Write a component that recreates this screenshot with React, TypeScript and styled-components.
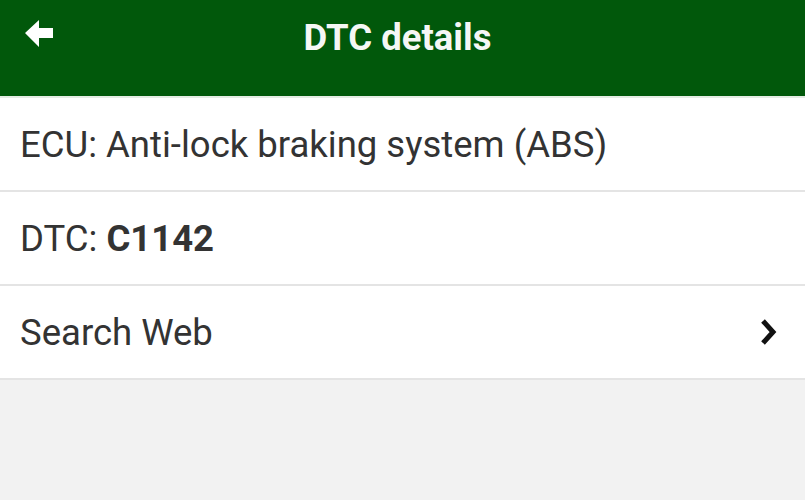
import React from 'react';
import styled, { createGlobalStyle } from 'styled-components';

const GlobalStyle = createGlobalStyle`
  html, body {
    margin: 0;
    padding: 0;
    background: #f2f2f2;
    font-family: Roboto, "Liberation Sans", Arial, sans-serif;
  }
`;

const Screen = styled.div`
  width: 805px;
  height: 500px;
  background: #f2f2f2;
  display: flex;
  flex-direction: column;
`;

const Header = styled.header`
  height: 96px;
  background: #01580b;
  display: grid;
  grid-template-columns: 96px 1fr 96px;
  align-items: start;
  border-bottom: 2px solid #e4ece4;
`;

const BackButton = styled.button`
  border: 0;
  background: none;
  padding: 0;
  margin: 19px 0 0 24px;
  width: 32px;
  height: 30px;
  display: flex;
  cursor: pointer;
`;

const Title = styled.h1`
  margin: 0;
  padding: 16px 10px 0 0;
  text-align: center;
  color: #f5f7f5;
  font-size: 36.5px;
  font-weight: 700;
  line-height: 44px;
`;

const List = styled.ul`
  list-style: none;
  margin: 0;
  padding: 0;
  background: #fff;
`;

const Row = styled.li<{ $link?: boolean }>`
  height: 92px;
  display: flex;
  align-items: center;
  justify-content: space-between;
  padding: 0 24px 0 20px;
  border-bottom: 2px solid #e4e4e4;
  font-size: 36.5px;
  color: #333;
  cursor: ${(p) => (p.$link ? 'pointer' : 'default')};
`;

const Label = styled.span`
  white-space: nowrap;
`;

const Strong = styled.b`
  font-weight: 700;
`;

const Chevron = () => (
  <svg width="24" height="30" viewBox="0 0 24 30">
    <polyline points="6,4 16,15 6,26" fill="none" stroke="#111" strokeWidth="5" strokeLinejoin="miter" />
  </svg>
);

const BackArrow = () => (
  <svg width="32" height="30" viewBox="0 0 32 30">
    <polygon points="1,14 15,1 15,9 29,9 29,19 15,19 15,28" fill="#fff" />
  </svg>
);

export default function App() {
  return (
    <Screen>
      <GlobalStyle />
      <Header>
        <BackButton aria-label="Back">
          <BackArrow />
        </BackButton>
        <Title>DTC details</Title>
        <span />
      </Header>
      <List>
        <Row>
          <Label>ECU: Anti-lock braking system (ABS)</Label>
        </Row>
        <Row>
          <Label>
            DTC: <Strong>C1142</Strong>
          </Label>
        </Row>
        <Row $link>
          <Label>Search Web</Label>
          <Chevron />
        </Row>
      </List>
    </Screen>
  );
}
